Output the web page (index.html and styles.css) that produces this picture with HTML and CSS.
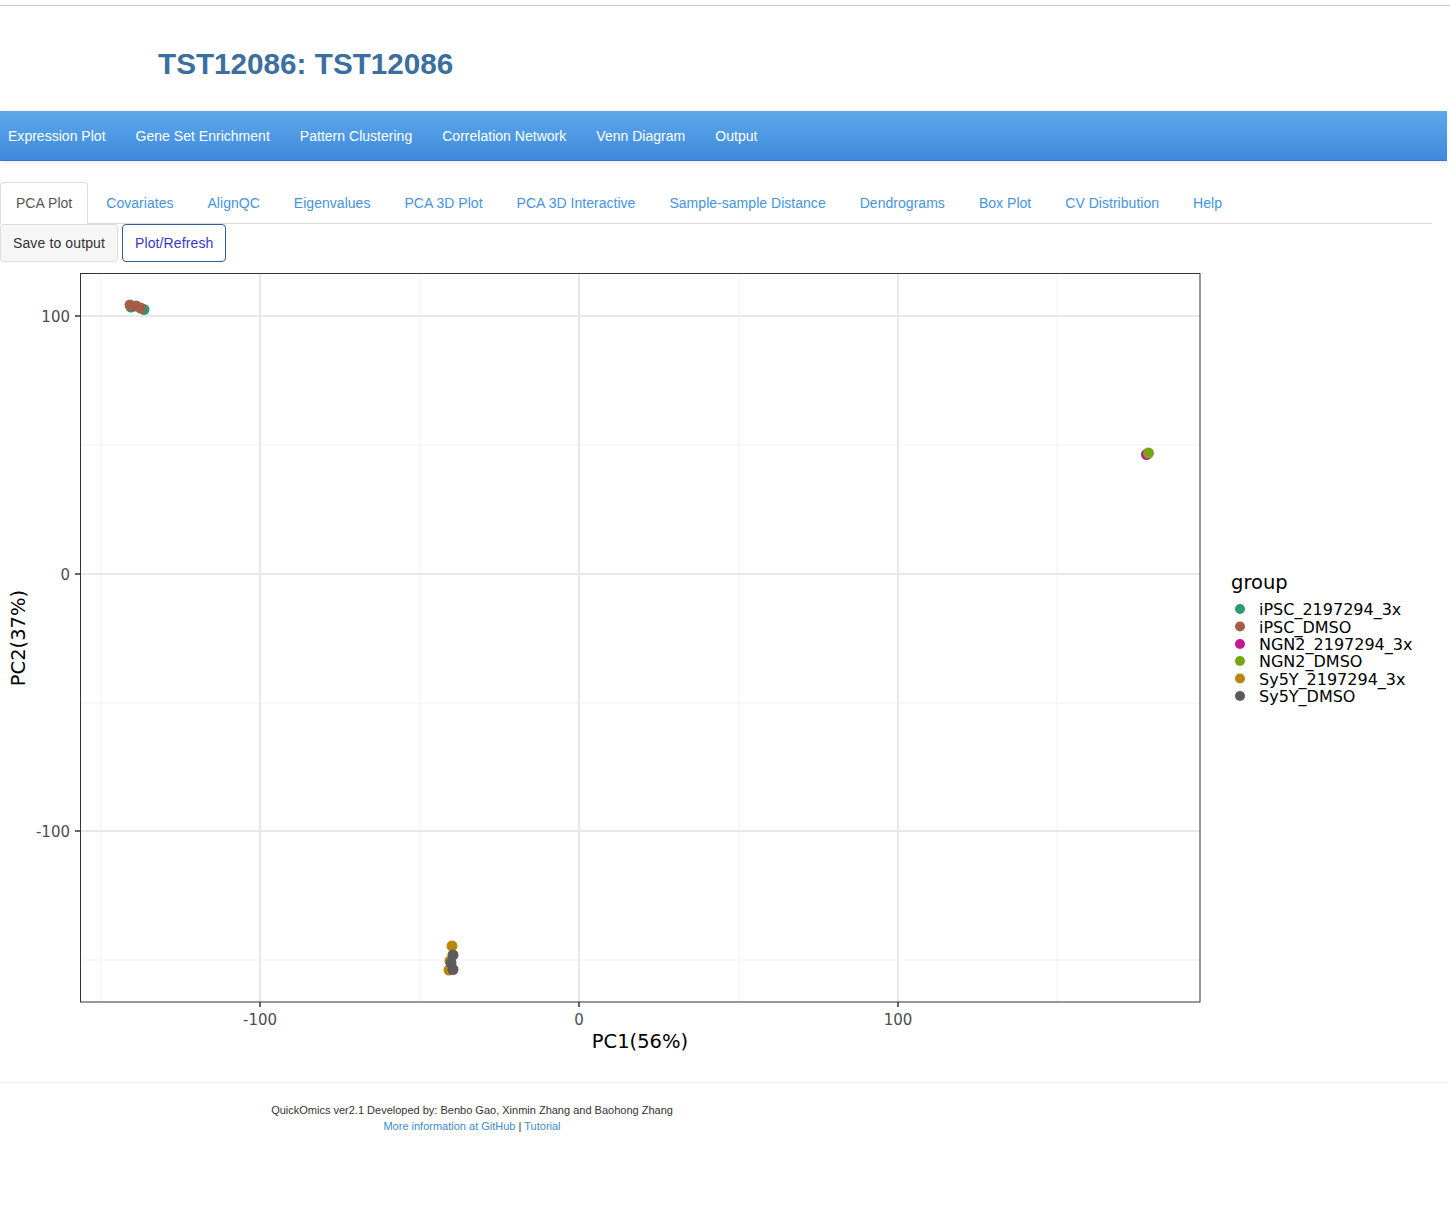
FILE: index.html
```html
<!DOCTYPE html>
<html>
<head>
<meta charset="utf-8">
<title>TST12086</title>
<link rel="stylesheet" href="styles.css">
</head>
<body>
<div class="topline"></div>
<h2 class="title">TST12086: TST12086</h2>
<nav class="navbar">
  <ul class="navlist">
    <li><a>Expression Plot</a></li>
    <li><a>Gene Set Enrichment</a></li>
    <li><a>Pattern Clustering</a></li>
    <li><a>Correlation Network</a></li>
    <li><a>Venn Diagram</a></li>
    <li><a>Output</a></li>
  </ul>
</nav>
<div class="content">
  <ul class="tabs">
    <li class="active"><a>PCA Plot</a></li>
    <li><a>Covariates</a></li>
    <li><a>AlignQC</a></li>
    <li><a>Eigenvalues</a></li>
    <li><a>PCA 3D Plot</a></li>
    <li><a>PCA 3D Interactive</a></li>
    <li><a>Sample-sample Distance</a></li>
    <li><a>Dendrograms</a></li>
    <li><a>Box Plot</a></li>
    <li><a>CV Distribution</a></li>
    <li><a>Help</a></li>
  </ul>
  <div class="buttons">
    <button class="btn">Save to output</button>
    <button class="btn btn-primary">Plot/Refresh</button>
  </div>
  <svg class="plot" width="1450" height="800" viewBox="0 262 1450 800" xmlns="http://www.w3.org/2000/svg">
    <rect x="80" y="273" width="1120" height="729" fill="#ffffff"/>
    <g stroke="#f1f1f1" stroke-width="1">
      <line x1="101" y1="273" x2="101" y2="1002"/>
      <line x1="420" y1="273" x2="420" y2="1002"/>
      <line x1="739" y1="273" x2="739" y2="1002"/>
      <line x1="1057" y1="273" x2="1057" y2="1002"/>
      <line x1="80" y1="445" x2="1200" y2="445"/>
      <line x1="80" y1="703" x2="1200" y2="703"/>
      <line x1="80" y1="960" x2="1200" y2="960"/>
    </g>
    <g stroke="#e8e8e8" stroke-width="2">
      <line x1="260" y1="273" x2="260" y2="1002"/>
      <line x1="579" y1="273" x2="579" y2="1002"/>
      <line x1="898" y1="273" x2="898" y2="1002"/>
      <line x1="80" y1="316" x2="1200" y2="316"/>
      <line x1="80" y1="574" x2="1200" y2="574"/>
      <line x1="80" y1="831" x2="1200" y2="831"/>
    </g>
    <g>
      <circle cx="131" cy="307" r="5.5" fill="#2a9a72"/>
      <circle cx="144" cy="309.5" r="5.5" fill="#2a9a72"/>
      <circle cx="130" cy="305" r="5.5" fill="#a65d45"/>
      <circle cx="136" cy="306" r="5.5" fill="#a65d45"/>
      <circle cx="140.5" cy="308" r="5.5" fill="#a65d45"/>
      <circle cx="1146.5" cy="454.5" r="5.5" fill="#c8178c"/>
      <circle cx="1148.5" cy="453" r="5.5" fill="#76a613"/>
      <circle cx="452" cy="946" r="5.5" fill="#b8860b"/>
      <circle cx="450" cy="961" r="5.5" fill="#b8860b"/>
      <circle cx="449" cy="970" r="5.5" fill="#b8860b"/>
      <circle cx="453" cy="955" r="5.5" fill="#5c5c5c"/>
      <circle cx="451" cy="963" r="5.5" fill="#5c5c5c"/>
      <circle cx="453" cy="969.5" r="5.5" fill="#5c5c5c"/>
    </g>
    <rect x="80.5" y="273.5" width="1119.5" height="728.5" fill="none" stroke="#333333" stroke-width="1"/>
    <g stroke="#333333" stroke-width="1.5">
      <line x1="75" y1="316" x2="80" y2="316"/>
      <line x1="75" y1="574" x2="80" y2="574"/>
      <line x1="75" y1="831" x2="80" y2="831"/>
      <line x1="260" y1="1002" x2="260" y2="1007"/>
      <line x1="579" y1="1002" x2="579" y2="1007"/>
      <line x1="898" y1="1002" x2="898" y2="1007"/>
    </g>
    <g class="ticklab" text-anchor="end">
      <text x="70" y="321.5">100</text>
      <text x="70" y="579.5">0</text>
      <text x="70" y="836.5">-100</text>
    </g>
    <g class="ticklab" text-anchor="middle">
      <text x="260" y="1025">-100</text>
      <text x="579" y="1025">0</text>
      <text x="898" y="1025">100</text>
    </g>
    <text class="axtitle" x="640" y="1048" text-anchor="middle">PC1(56%)</text>
    <text class="axtitle" x="0" y="0" text-anchor="middle" transform="translate(25 638) rotate(-90)">PC2(37%)</text>
    <text class="legtitle" x="1231" y="589">group</text>
    <g>
      <circle cx="1240" cy="609" r="5" fill="#2a9a72"/>
      <circle cx="1240" cy="626.5" r="5" fill="#a65d45"/>
      <circle cx="1240" cy="644" r="5" fill="#c8178c"/>
      <circle cx="1240" cy="661" r="5" fill="#76a613"/>
      <circle cx="1240" cy="678.5" r="5" fill="#b8860b"/>
      <circle cx="1240" cy="696" r="5" fill="#5c5c5c"/>
    </g>
    <g class="leglab">
      <text x="1259" y="615">iPSC_2197294_3x</text>
      <text x="1259" y="632.5">iPSC_DMSO</text>
      <text x="1259" y="650">NGN2_2197294_3x</text>
      <text x="1259" y="667">NGN2_DMSO</text>
      <text x="1259" y="684.5">Sy5Y_2197294_3x</text>
      <text x="1259" y="702">Sy5Y_DMSO</text>
    </g>
  </svg>
</div>
<footer class="footer">
  <div class="footer-inner">
    <div class="credits">QuickOmics ver2.1 Developed by: Benbo Gao, Xinmin Zhang and Baohong Zhang</div>
    <div class="links"><a>More information at GitHub</a> | <a>Tutorial</a></div>
  </div>
</footer>
</body>
</html>
```
FILE: styles.css
```css
* { box-sizing: border-box; }
html, body { margin: 0; padding: 0; background: #ffffff; }
body {
  font-family: "Liberation Sans", Arial, Helvetica, sans-serif;
  font-size: 14px;
  line-height: 20px;
  color: #333333;
  width: 1450px;
}
.topline {
  margin-top: 5px;
  height: 1px;
  background: #c9c9c9;
}
.title {
  margin: 41px 0 0 158px;
  font-size: 29.7px;
  line-height: 33px;
  font-weight: bold;
  color: #3a6f9f;
}
.navbar {
  margin-top: 31px;
  width: 1447px;
  height: 50px;
  background: linear-gradient(to bottom, #5ca8e9 0%, #3f8ade 100%);
  border-bottom: 1px solid #3a78c4;
  box-shadow: 0 2px 6px rgba(0, 0, 0, 0.08);
}
.navlist {
  list-style: none;
  margin: 0;
  padding: 0;
  display: flex;
}
.navlist a {
  display: block;
  padding: 15px 15px 14px 15px;
  color: #ffffff;
  line-height: 20px;
  letter-spacing: 0.02px;
}
.navlist li:first-child a { padding-left: 8px; }
.content { margin-top: 21px; }
.tabs {
  list-style: none;
  margin: 0;
  padding: 0;
  width: 1432px;
  display: flex;
  border-bottom: 1px solid #dddddd;
}
.tabs li { margin-bottom: -1px; margin-right: 2px; }
.tabs a {
  display: block;
  padding: 10px 15px;
  border: 1px solid transparent;
  border-radius: 4px 4px 0 0;
  color: #4494e0;
  line-height: 20px;
  letter-spacing: 0.03px;
}
.tabs li.active a {
  color: #555555;
  background: #ffffff;
  border-color: #dddddd #dddddd transparent #dddddd;
}
.buttons { display: flex; gap: 4px; }
.btn {
  font-family: "Liberation Sans", Arial, Helvetica, sans-serif;
  font-size: 14px;
  line-height: 20px;
  padding: 8px 12px;
  border: 1px solid #dddddd;
  border-radius: 4px;
  background: #f6f6f6;
  color: #333333;
  margin: 0;
  letter-spacing: 0.12px;
}
.btn-primary {
  background: #ffffff;
  border-color: #2d5d96;
  color: #3838c8;
}
.plot { display: block; }
.ticklab { font-family: "DejaVu Sans", sans-serif; font-size: 15px; fill: #4d4d4d; }
.axtitle { font-family: "DejaVu Sans", sans-serif; font-size: 19.5px; fill: #000000; }
.legtitle { font-family: "DejaVu Sans", sans-serif; font-size: 19.5px; fill: #000000; }
.leglab { font-family: "DejaVu Sans", sans-serif; font-size: 16px; fill: #000000; }
.footer {
  margin-top: 20px;
  width: 1447px;
  border-top: 1px solid #eeeeee;
  padding-top: 19px;
}
.footer-inner {
  width: 944px;
  text-align: center;
  font-size: 11px;
  line-height: 16px;
}
.credits { color: #333333; }
.links { color: #333333; }
.links a { color: #428bca; }
```
